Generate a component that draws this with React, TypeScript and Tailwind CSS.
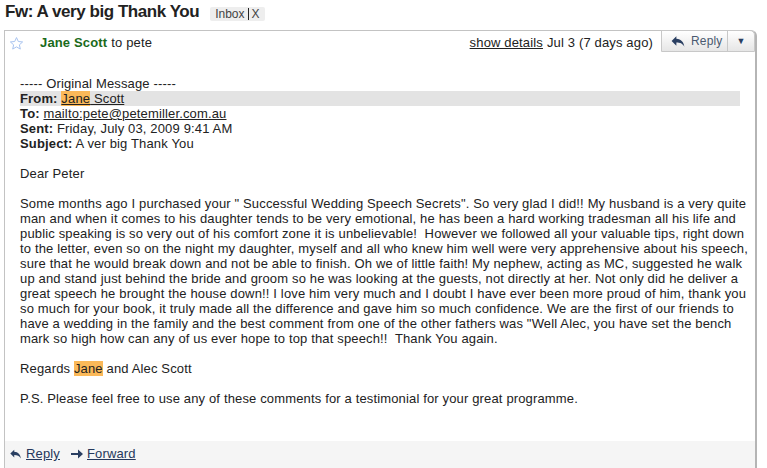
export default function App() {
  const lines = [
    'Some months ago I purchased your " Successful Wedding Speech Secrets". So very glad I did!! My husband is a very quite',
    'man and when it comes to his daughter tends to be very emotional, he has been a hard working tradesman all his life and',
    'public speaking is so very out of his comfort zone it is unbelievable!\u00a0 However we followed all your valuable tips, right down',
    'to the letter, even so on the night my daughter, myself and all who knew him well were very apprehensive about his speech,',
    'sure that he would break down and not be able to finish. Oh we of little faith! My nephew, acting as MC, suggested he walk',
    'up and stand just behind the bride and groom so he was looking at the guests, not directly at her. Not only did he deliver a',
    'great speech he brought the house down!! I love him very much and I doubt I have ever been more proud of him, thank you',
    'so much for your book, it truly made all the difference and gave him so much confidence. We are the first of our friends to',
    'have a wedding in the family and the best comment from one of the other fathers was "Well Alec, you have set the bench',
    'mark so high how can any of us ever hope to top that speech!!\u00a0 Thank You again.',
  ];

  return (
    <div className="w-[767px] h-[468px] overflow-hidden bg-white text-[13px] leading-[15px] text-[#222]" style={{ fontFamily: '"Liberation Sans", Arial, sans-serif' }}>
      {/* subject line */}
      <div className="h-[30px] flex items-start pt-[2px] pl-[5px] gap-[11px]">
        <h1 className="text-[17px] leading-[20px] font-bold tracking-[-0.45px] text-[#222]">Fw: A very big Thank You</h1>
        <div className="mt-[5px] flex items-center h-[14px] px-[5px] bg-[#eee] rounded-[2px] text-[12px] leading-[14px] text-[#444]">
          <span>Inbox</span>
          <span className="mx-[3px] w-px h-[12px] bg-[#222]"></span>
          <span>X</span>
        </div>
      </div>

      {/* message card */}
      <div className="ml-[4px] w-[753px] h-[460px] border-l border-t border-[#c3c3c3] border-r-2 border-r-[#b5b5b5] rounded-tr-[6px] flex flex-col tracking-[0.15px]">
        <div className="h-[21px] flex items-center">
          <svg width="15" height="15" viewBox="0 0 24 24" className="ml-[4px] mt-[3px]">
            <path d="M12 2.5l2.9 6.3 6.9.7-5.2 4.6 1.5 6.8L12 17.4l-6.1 3.5 1.5-6.8L2.2 9.5l6.9-.7z" fill="#fff" stroke="#a9c4f0" strokeWidth="1.6" strokeLinejoin="round" />
          </svg>
          <span className="ml-[16px] mt-[2px] font-bold text-[#1a6a1a]">Jane Scott</span>
          <span className="ml-[4px] mt-[2px]">to pete</span>
          <div className="ml-auto flex items-center h-full">
            <span className="underline text-[#222] mt-[2px]">show details</span>
            <span className="ml-[4px] mt-[2px]">Jul 3 (7 days ago)</span>
            <div className="ml-[8px] h-[22px] -mt-px flex border border-[#c8c8c8] bg-gradient-to-b from-white to-[#e6e6e6] rounded-tr-[5px]">
              <div className="w-[66px] flex items-center pl-[8px] gap-[4px] border-r border-[#c8c8c8] text-[12px] text-[#4a5a70]">
                <svg width="17" height="13" viewBox="0 0 16 12">
                  <path d="M6 1L1.5 5.5 6 10V7c3.5 0 5.8 0.8 7.5 4 -0.4-4.5-3-7.5-7.5-7.7z" fill="#2a3f62" />
                </svg>
                <span>Reply</span>
              </div>
              <div className="w-[26px] flex items-center justify-center text-[9px] text-[#2a3f62]">▼</div>
            </div>
          </div>
        </div>

        <div className="pl-[15px] pr-[15px] pt-[24px] flex-1">
          <div>----- Original Message -----</div>
          <div className="bg-[#e3e3e3] w-[720px]">
            <b>From:</b>{' '}
            <span className="underline">
              <span className="bg-[#fbb959]">Jane</span> Scott
            </span>
          </div>
          <div>
            <b>To:</b> <span className="underline">mailto:pete@petemiller.com.au</span>
          </div>
          <div>
            <b>Sent:</b> Friday, July 03, 2009 9:41 AM
          </div>
          <div>
            <b>Subject:</b> A ver big Thank You
          </div>
          <div className="mt-[15px]">Dear Peter</div>
          <div className="mt-[15px]">
            {lines.map((l, i) => (
              <div key={i} className="whitespace-pre">{l}</div>
            ))}
          </div>
          <div className="mt-[15px]">
            Regards <span className="bg-[#fbb959]">Jane</span> and Alec Scott
          </div>
          <div className="mt-[15px]">P.S. Please feel free to use any of these comments for a testimonial for your great programme.</div>
        </div>

        <div className="mt-auto h-[49px] bg-[#f5f5f5] flex items-start pt-[5px] pl-[4px] text-[#26385c]">
          <div className="flex items-center gap-[3px]">
            <svg width="14" height="12" viewBox="0 0 16 12">
              <path d="M6 1L1.5 5.5 6 10V7c3.5 0 5.8 0.8 7.5 4 -0.4-4.5-3-7.5-7.5-7.7z" fill="#2a3f62" />
            </svg>
            <span className="underline">Reply</span>
          </div>
          <div className="ml-[10px] flex items-center gap-[3px]">
            <svg width="14" height="12" viewBox="0 0 14 12">
              <path d="M1 5h7V1.5L13 6l-5 4.5V7H1z" fill="#2a3f62" />
            </svg>
            <span className="underline">Forward</span>
          </div>
        </div>
      </div>
    </div>
  );
}
